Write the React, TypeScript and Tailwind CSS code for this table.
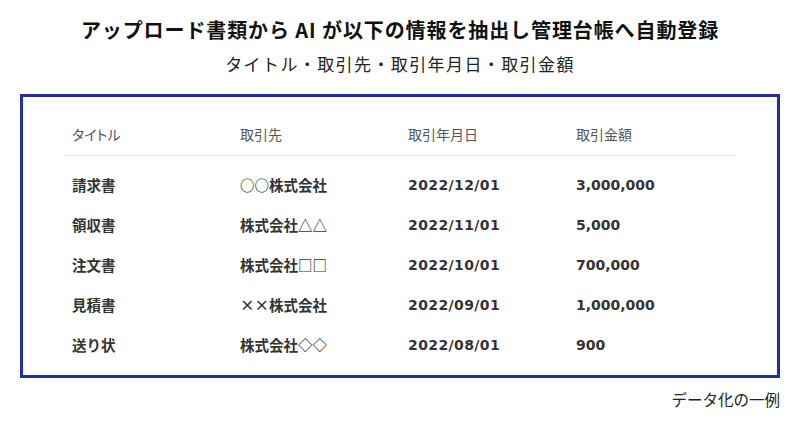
import React from 'react';

const rows = [
  { title: '請求書', partner: '○○株式会社', date: '2022/12/01', amount: '3,000,000' },
  { title: '領収書', partner: '株式会社△△', date: '2022/11/01', amount: '5,000' },
  { title: '注文書', partner: '株式会社□□', date: '2022/10/01', amount: '700,000' },
  { title: '見積書', partner: '××株式会社', date: '2022/09/01', amount: '1,000,000' },
  { title: '送り状', partner: '株式会社◇◇', date: '2022/08/01', amount: '900' },
];

export default function App() {
  return (
    <div className="w-[800px] h-[430px] bg-white font-[family-name:'Noto_Sans_CJK_JP',sans-serif] text-[#111]">
      <div className="pt-[15px] flex flex-col items-center">
        <h1 className="text-[20px] leading-[30px] font-bold tracking-[0.9px]">
          アップロード書類から AI が以下の情報を抽出し管理台帳へ自動登録
        </h1>
        <p className="mt-[6px] text-[17px] leading-[26px] tracking-[1.4px] text-[#222]">
          タイトル・取引先・取引年月日・取引金額
        </p>
      </div>
      <div className="mt-[17px] mx-[20px] w-[760px] h-[284px] border-[3px] border-[#1f2fa8] px-[41px] pt-[26px]">
        <div className="grid grid-cols-[168px_168px_168px_1fr] border-b border-[#e2e2e2] pb-[10px] px-[8px] text-[14px] leading-[22px] text-[#555] [font-feature-settings:'palt']">
          <span>タイトル</span>
          <span>取引先</span>
          <span>取引年月日</span>
          <span>取引金額</span>
        </div>
        <div className="pt-[17px]">
          {rows.map((r) => (
            <div
              key={r.title}
              className="grid grid-cols-[168px_168px_168px_1fr] px-[8px] h-[40px] text-[14.5px] leading-[24px] font-bold text-[#333]"
            >
              <span>{r.title}</span>
              <span>{r.partner}</span>
              <span className="font-[family-name:'DejaVu_Sans',sans-serif] text-[14px] tracking-[0.4px]">{r.date}</span>
              <span className="font-[family-name:'DejaVu_Sans',sans-serif] text-[14px]">{r.amount}</span>
            </div>
          ))}
        </div>
      </div>
      <div className="w-[780px] mt-[11px] text-right text-[15.5px] leading-[20px] text-[#222]">
        データ化の一例
      </div>
    </div>
  );
}
